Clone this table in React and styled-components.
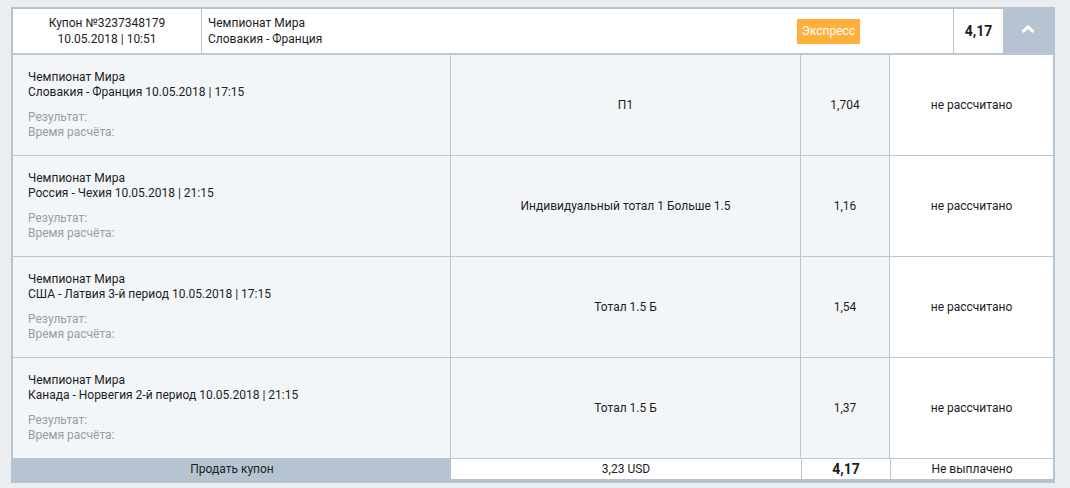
import React from 'react';
import styled, { createGlobalStyle } from 'styled-components';

const GlobalStyle = createGlobalStyle`
  html, body {
    margin: 0;
    padding: 0;
    background: #ebeef0;
  }
  body {
    font-family: Roboto, "Liberation Sans", Arial, sans-serif;
    font-size: 12px;
    color: #1d1d1d;
  }
`;

const LINE = '#bac8d4';
const FRAME = '#b5c4d0';
const COLS = '438px 350px 89px 1fr';

const Page = styled.div`
  padding: 7px 0 0 11px;
`;

const Card = styled.div`
  width: 1040px;
  border: 2px solid ${FRAME};
  border-bottom-width: 4px;
  background: #fff;
`;

const Header = styled.div`
  display: grid;
  grid-template-columns: 189px 752px 49px 50px;
  height: 44px;
  border-bottom: 2px solid ${LINE};
`;

const Coupon = styled.div`
  display: flex;
  flex-direction: column;
  align-items: center;
  justify-content: center;
  line-height: 16px;
  border-right: 1px solid ${LINE};
`;

const Title = styled.div`
  display: flex;
  align-items: center;
  justify-content: space-between;
  padding: 0 93px 0 6px;
  border-right: 1px solid ${LINE};
  line-height: 16px;
`;

const Badge = styled.span`
  display: inline-flex;
  align-items: center;
  justify-content: center;
  width: 63px;
  height: 25px;
  background: #ffb03b;
  color: #fff;
  font-size: 12px;
`;

const HeadOdds = styled.div`
  display: flex;
  align-items: center;
  justify-content: center;
  font-weight: bold;
  font-size: 14px;
`;

const Toggle = styled.button`
  display: flex;
  align-items: center;
  justify-content: center;
  border: 0;
  padding: 0 0 2px;
  margin-top: -2px;
  height: 46px;
  background: ${FRAME};
  cursor: pointer;
`;

const Row = styled.div`
  display: grid;
  grid-template-columns: ${COLS};
  height: 100px;
  border-bottom: 1px solid ${LINE};
  background: #f3f6f9;
`;

const Cell = styled.div`
  display: flex;
  align-items: center;
  justify-content: center;
  border-right: ${p => (p.$last ? 'none' : `1px solid ${LINE}`)};
  background: ${p => (p.$white ? '#fff' : 'transparent')};
`;

const EventCell = styled.div`
  padding: 15px 15px 0;
  line-height: 15px;
  border-right: 1px solid ${LINE};
`;

const Muted = styled.div`
  margin-top: 10px;
  color: #9c9c9c;
`;

const Footer = styled.div`
  display: grid;
  grid-template-columns: ${COLS};
  height: 20px;
  line-height: 20px;
`;

const Sell = styled.div`
  background: ${FRAME};
  text-align: center;
  color: #222;
`;

const FootCell = styled.div`
  text-align: center;
  border-left: ${p => (p.$first ? 'none' : `1px solid ${LINE}`)};
  font-weight: ${p => (p.$bold ? 'bold' : 'normal')};
  font-size: ${p => (p.$bold ? '14px' : '12px')};
`;

const bets = [
  { match: 'Словакия - Франция 10.05.2018 | 17:15', pick: 'П1', odds: '1,704' },
  { match: 'Россия - Чехия 10.05.2018 | 21:15', pick: 'Индивидуальный тотал 1 Больше 1.5', odds: '1,16' },
  { match: 'США - Латвия 3-й период 10.05.2018 | 17:15', pick: 'Тотал 1.5 Б', odds: '1,54' },
  { match: 'Канада - Норвегия 2-й период 10.05.2018 | 21:15', pick: 'Тотал 1.5 Б', odds: '1,37' },
];

export default function App() {
  return (
    <Page>
      <GlobalStyle />
      <Card>
        <Header>
          <Coupon>
            <div>Купон №3237348179</div>
            <div>10.05.2018 | 10:51</div>
          </Coupon>
          <Title>
            <div>
              <div>Чемпионат Мира</div>
              <div>Словакия - Франция</div>
            </div>
            <Badge>Экспресс</Badge>
          </Title>
          <HeadOdds>4,17</HeadOdds>
          <Toggle aria-label="Свернуть">
            <svg width="14" height="8" viewBox="0 0 14 8">
              <polyline points="1.5,6.8 7,2 12.5,6.8" fill="none" stroke="#fff" strokeWidth="3" />
            </svg>
          </Toggle>
        </Header>
        {bets.map(b => (
          <Row key={b.match}>
            <EventCell>
              <div>Чемпионат Мира</div>
              <div>{b.match}</div>
              <Muted>
                <div>Результат:</div>
                <div>Время расчёта:</div>
              </Muted>
            </EventCell>
            <Cell>{b.pick}</Cell>
            <Cell>{b.odds}</Cell>
            <Cell $white $last>не рассчитано</Cell>
          </Row>
        ))}
        <Footer>
          <Sell>Продать купон</Sell>
          <FootCell $first>3,23 USD</FootCell>
          <FootCell $bold>4,17</FootCell>
          <FootCell>Не выплачено</FootCell>
        </Footer>
      </Card>
    </Page>
  );
}
